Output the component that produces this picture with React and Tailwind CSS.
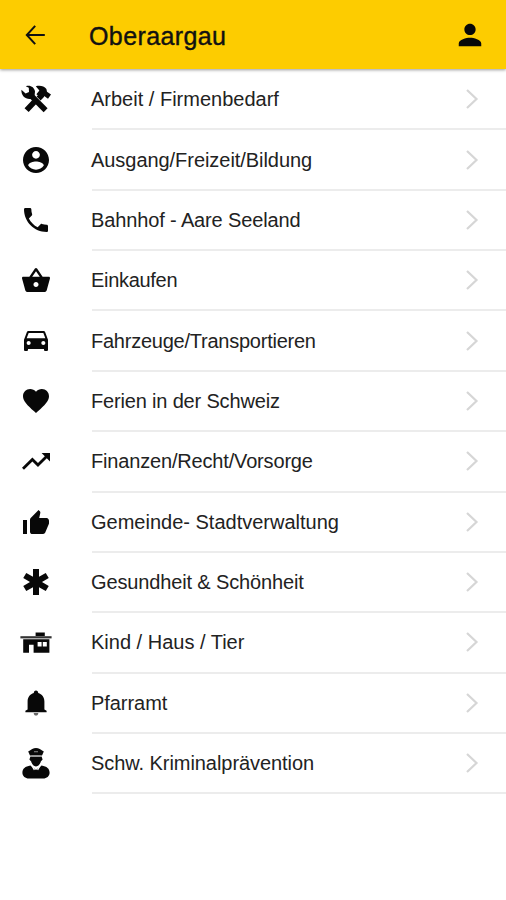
import {
  IoMdBasket,
  IoMdCall,
  IoMdCar,
  IoMdContact,
  IoMdHeart,
  IoMdMedical,
  IoMdPerson,
  IoMdThumbsUp,
  IoMdTrendingUp,
} from 'react-icons/io';

const ToolsIcon = ({ className }) => (
  <svg className={className} viewBox="0 0 32 32" fill="none" stroke="currentColor">
    <path d="M9 10.500L25.600 27.200" strokeWidth="5.600" />
    <path d="M1.400 6.800L5.600 10.600L9 9L8.800 4.800L5.800 3.200C10 1.600 14.400 4 15 8.600L14.600 12.600L10.600 16C5.400 16.600 1 12.600 1.400 6.800Z" fill="currentColor" stroke="none" />
    <path d="M22.400 11.600L18.600 15.400M14.400 18.800L6.600 27.200" strokeWidth="5.600" />
    <path d="M15.800 3.200C20 2 24 3 26.400 6L27 8.800L31 11.400L28 15.800L24.200 13L22 15.600L16.400 11.200L19.400 7.400Z" fill="currentColor" stroke="none" />
  </svg>
);

const HouseIcon = ({ className }) => (
  <svg className={className} viewBox="0 0 32 32" fill="currentColor">
    <path d="M15.600 6.500h9.200V10h-9.200z" />
    <path d="M.4 10.200h31.200v2.200H.4z" fill="#333" />
    <path d="M3.200 13.300H29.400v13.500H13.600v-8H9v8H3.200zM17.600 16v4.600h4V16zm5.200 0v4.600h4V16z" fillRule="evenodd" />
  </svg>
);

const BellIcon = ({ className }) => (
  <svg className={className} viewBox="0 0 32 32" fill="currentColor">
    <path d="M16 3.400c1.400 0 2.200 1 2.200 2.600 3.800 1 6.200 4.200 6.200 8.400V22.400l2.200 1.400v1.400H5.400v-1.400L7.600 22.400v-8c0-4.200 2.400-7.400 6.200-8.400 0-1.600.8-2.600 2.200-2.600z" />
    <path d="M13.700 26h4.600c0 1.700-1 2.600-2.300 2.600s-2.300-.9-2.300-2.600z" fill="#666" />
  </svg>
);

const OfficerIcon = ({ className }) => (
  <svg className={className} viewBox="0 0 32 32" fill="currentColor">
    <path d="M8.200 4.600C11 2.600 13.400 1 16 1s5 1.600 7.800 3.600l-1.800 4H10z" />
    <path d="M10.400 9.600h11.200l1 2.800-1.800 2c-.7 3-2.600 5-4.800 5s-4.100-2-4.800-5l-1.800-2z" />
    <path d="M10.400 18.600L16 23l5.600-4.400c5.200.8 8 3.200 8 7.200 0 3.400-3 5.800-6.400 5.800H8.800c-3.400 0-6.400-2.400-6.400-5.800 0-4 2.800-6.400 8-7.200z" />
    <path d="M11.400 9.100h9.200" stroke="#aaa" strokeWidth="1" />
    <path d="M14 4.700h4" stroke="#777" strokeWidth="1.200" />
    <path d="M11.900 18.700l2.500 4.300M20.100 18.700l-2.500 4.300" stroke="#fff" strokeWidth="1.200" />
  </svg>
);

const categories = [
  { label: 'Arbeit / Firmenbedarf', icon: ToolsIcon, tracking: 'tracking-normal' },
  { label: 'Ausgang/Freizeit/Bildung', icon: IoMdContact, tracking: 'tracking-[-0.05px]' },
  { label: 'Bahnhof - Aare Seeland', icon: IoMdCall, tracking: 'tracking-[-0.13px]' },
  { label: 'Einkaufen', icon: IoMdBasket, tracking: 'tracking-[-0.3px]' },
  { label: 'Fahrzeuge/Transportieren', icon: IoMdCar, tracking: 'tracking-[-0.24px]' },
  { label: 'Ferien in der Schweiz', icon: IoMdHeart, tracking: 'tracking-[-0.17px]' },
  { label: 'Finanzen/Recht/Vorsorge', icon: IoMdTrendingUp, tracking: 'tracking-[-0.17px]' },
  { label: 'Gemeinde- Stadtverwaltung', icon: IoMdThumbsUp, tracking: 'tracking-normal' },
  { label: 'Gesundheit & Schönheit', icon: IoMdMedical, tracking: 'tracking-[-0.14px]' },
  { label: 'Kind / Haus / Tier', icon: HouseIcon, tracking: 'tracking-normal' },
  { label: 'Pfarramt', icon: BellIcon, tracking: 'tracking-[-0.05px]' },
  { label: 'Schw. Kriminalprävention', icon: OfficerIcon, tracking: 'tracking-[-0.06px]' },
];

const Header = () => (
  <header className="mb-px flex h-[69px] items-center bg-[#fdcc00] pr-5 pl-6 shadow-[0_1px_3px_rgba(0,0,0,0.4)]">
    <button type="button" aria-label="Zurück" className="w-[65px]">
      <svg className="h-[22px] w-[22px]" viewBox="0 0 22 22" fill="none" stroke="currentColor" strokeWidth="2">
        <path d="M11.200 1.800L2.800 11l8.400 9.200M2.800 11H20.800" />
      </svg>
    </button>
    <h1 className="flex-1 pt-0.5 text-[25px] leading-8 tracking-[0.4px] [-webkit-text-stroke:0.4px_#111]">Oberaargau</h1>
    <button type="button" aria-label="Profil">
      <IoMdPerson className="h-[30px] w-8 text-[#080808]" />
    </button>
  </header>
);

const CategoryRow = ({ label, icon: Icon, tracking }) => (
  <li className="flex h-[60.36px] items-center pl-5">
    <Icon className="mb-0.5 h-8 w-8 shrink-0 text-[#080808]" />
    <div className="ml-10 flex h-full flex-1 items-center justify-between border-b-2 border-[#ececec] pr-[27px]">
      <span className={`-ml-px text-[20px] leading-6 whitespace-nowrap text-[#222] ${tracking}`}>{label}</span>
      <svg className="h-5 w-3.5" viewBox="0 0 14 20" fill="none" stroke="#d6d6d6" strokeWidth="2.2">
        <path d="M2 1l9.500 9L2 19" />
      </svg>
    </div>
  </li>
);

export default function App() {
  return (
    <div className="h-[900px] w-[506px] overflow-hidden bg-white font-['Liberation_Sans',Arial,sans-serif] text-[#111]">
      <Header />
      <ul>
        {categories.map((category) => (
          <CategoryRow key={category.label} {...category} />
        ))}
      </ul>
    </div>
  );
}
